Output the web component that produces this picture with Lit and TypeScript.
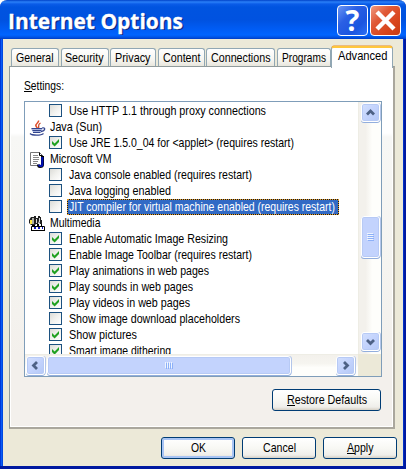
import { LitElement, html, svg, css } from "lit";
import { customElement, property } from "lit/decorators.js";

/** One line of text fitted to a fixed advance width. `mark` underlines the first letter. */
@customElement("ui-label")
class UiLabel extends LitElement {
  @property() text = "";
  @property({ type: Number }) w = 40;
  @property({ type: Number }) dx = 0;
  @property({ type: Number }) base = 12;
  @property({ type: Boolean }) mark = false;

  static styles = css`
    :host { display: block; flex: none; color: #000; }
    svg { display: block; overflow: visible; }
    text { font: 12.6px "Liberation Sans", Arial, sans-serif; fill: currentColor; white-space: pre; }
    .line { stroke: currentColor; stroke-width: 1; shape-rendering: crispEdges; }
  `;

  render() {
    return html`<svg width=${this.w} height="16">
      <text x=${this.dx} y=${this.base} textLength=${this.w} lengthAdjust="spacingAndGlyphs">${this.text}</text>
      ${this.mark ? svg`<path class="line" d="M${this.dx} ${Math.floor(this.base) + 1.5}h7.5"/>` : ""}
    </svg>`;
  }
}

@customElement("ui-check")
class UiCheck extends LitElement {
  @property({ type: Boolean }) on = false;

  static styles = css`
    :host {
      display: block; box-sizing: border-box; width: 13px; height: 13px; flex: none;
      border: 1px solid #1c5180; background: linear-gradient(135deg, #dcdcd7, #f1f1ee 50%, #fff);
    }
    svg { display: block; }
  `;

  render() {
    return html`<svg width="11" height="11">
      ${this.on ? svg`<path d="M2 4v3l2.6 2.6L9 5V2L4.6 6.4z" fill="#21a121"/>` : ""}
    </svg>`;
  }
}

const javaIcon = svg`
  <path d="M8.5 0.5c1 2-3.5 3-2.5 5.500 .3 1 1.500 1.500 1.500 2.500" fill="none" stroke="#e0502c" stroke-width="1.500"/>
  <path d="M10.500 3c-3 1.500-1.500 2.500-1.800 5" fill="none" stroke="#c8401c" stroke-width="1.200"/>
  <path d="M1 8.500h11.500l-1 3.800H3z" fill="#a9b5dc"/>
  <path d="M1.500 8.500h10.500M2.500 10.500h8.500M3 12.500h7.500M0 13.500c2 2.200 11 2.200 13.500 0" fill="none" stroke="#34468f" stroke-width="1.200"/>
  <path d="M12 8c4-1.200 3.500 3-1 3.500" fill="none" stroke="#34468f" stroke-width="1.300"/>`;

const vmIcon = svg`
  <path d="M.5.500h9l3 3v10H.5z" fill="#fff" stroke="#777"/>
  <path d="M9.500.500v3h3" fill="none" stroke="#000"/>
  <path d="M3 3.500h5M3 5.500h6M3 7.500h6M3 9.500h5M3 11.500h4" stroke="#888" fill="none"/>
  <path d="M12.500 4v8.500c0 1.600-1 2-2.500 2-1 0-1.500-.6-1.500-2" fill="none" stroke="#000" stroke-width="3"/>
  <path d="M12.300 5v7.500c0 1.200-.8 1.500-2 1.500-.8 0-1.200-.4-1.300-1.300" fill="none" stroke="#0010b8" stroke-width="2.200"/>`;

const mediaIcon = svg`
  <path d="M1 1h3V0h2v2h2V0h2v1h1v3h1v4h-2l-1-3-1 3H6L5 9H1L-1 7V4z" fill="#222"/>
  <path d="M0 4h2v4H0z" fill="#ffe840"/><path d="M2 2h2v6H2z" fill="#b0b0a8"/>
  <path d="M6 3h1v4H6zM9 2h1v4H9z" fill="#ddd"/>
  <path d="M1.500 10.500h13v4h-13z" fill="#fff" stroke="#000"/>
  <path d="M2 9h3v2H2zM7 8h2v3H7zM11 8h1v3h-1z" fill="#000"/>
  <path d="M4 11h2v2H4zM8 11h2v2H8zM12 11h1v2h-1z" fill="#1018c0"/>
  <path d="M1 14h14v1H1z" fill="#000"/>`;

type Row = { text: string; w: number; on?: boolean; icon?: unknown; selected?: boolean };

const rows: Row[] = [
  { text: "Use HTTP 1.1 through proxy connections", w: 197 },
  { text: "Java (Sun)", w: 52, icon: javaIcon },
  { text: "Use JRE 1.5.0_04 for <applet> (requires restart)", w: 225, on: true },
  { text: "Microsoft VM", w: 61.5, icon: vmIcon },
  { text: "Java console enabled (requires restart)", w: 183 },
  { text: "Java logging enabled", w: 102 },
  { text: "JIT compiler for virtual machine enabled (requires restart)", w: 266, selected: true },
  { text: "Multimedia", w: 50.5, icon: mediaIcon },
  { text: "Enable Automatic Image Resizing", w: 159, on: true },
  { text: "Enable Image Toolbar (requires restart)", w: 183, on: true },
  { text: "Play animations in web pages", w: 140, on: true },
  { text: "Play sounds in web pages", w: 124, on: true },
  { text: "Play videos in web pages", w: 121, on: true },
  { text: "Show image download placeholders", w: 171 },
  { text: "Show pictures", w: 68, on: true },
  { text: "Smart image dithering", w: 102, on: true },
];

const tabs = [
  { text: "General", box: 48, w: 37.5 },
  { text: "Security", box: 48, w: 38.5 },
  { text: "Privacy", box: 46, w: 35.5 },
  { text: "Content", box: 47, w: 37.5 },
  { text: "Connections", box: 69, w: 59.5 },
  { text: "Programs", box: 54, w: 44 },
];

const arrows: Record<string, string> = {
  up: "M5.500 11 9 7.500l3.500 3.500",
  down: "M5.500 7.500 9 11l3.500-3.500",
  left: "M10.500 5.500 7 9l3.500 3.500",
  right: "M7.500 5.500 11 9l-3.500 3.500",
};

@customElement("app-root")
class AppRoot extends LitElement {
  static styles = css`
    :host { display: block; width: 406px; height: 469px; overflow: hidden; }
    * { box-sizing: border-box; }
    svg { display: block; }
    .window {
      width: 406px; height: 469px; display: flex; flex-direction: column;
      background: linear-gradient(90deg, #0038d8 0, #0038d8 1px, #0a5cf5 1px, #0a5cf5 2px, #0148e0 2px, #0148e0 3px, transparent 3px, transparent 403px, #0030c8 403px, #0030c8 404px, #0019a0 404px), #ece9d8;
      border-radius: 7px 7px 0 0; border-bottom: 3px solid #0019a0;
    }
    .title {
      height: 39px; flex: none; display: flex; padding: 5px 5px 0 8px; gap: 2px;
      background: linear-gradient(180deg, #0042c8 0, #2a80f8 2px, #0a5ce8 4px, #0054e0 7px, #0052e0 20px, #005cf4 29px, #0064ff 35px, #0055e8 37px, #003cc4 39px);
      border-radius: 7px 7px 0 0;
    }
    .caption { flex: 1; }
    .caption svg { overflow: visible; }
    .caption text { font: 700 21.5px "Open Sans", "Noto Sans", sans-serif; }
    .shade { fill: #0a2a88; }
    .face { fill: #fff; stroke: #fff; stroke-width: .3; }
    .tool { width: 31px; height: 31px; border: 1px solid #fff; border-radius: 4px; }
    .tool svg { width: 29px; height: 29px; overflow: visible; }
    .help { background: linear-gradient(135deg, #6b96f4, #2a60e4 35%, #1c55e0 70%, #2b70f5); }
    .close { background: linear-gradient(135deg, #f09a80, #e05a38 35%, #d8451c 70%, #c83c14); }
    .q { font: 700 29px "Open Sans", sans-serif; fill: #fff; }
    .tabs { height: 28px; flex: none; display: flex; align-items: flex-end; padding-left: 11px; gap: 1.600px; }
    .tab {
      height: 19px; border: 1px solid #91a7b4; border-bottom: none; border-radius: 3px 3px 0 0;
      background: linear-gradient(#fff, #f6f5f0 60%, #e6e4da); display: flex; justify-content: center; padding-top: 1px;
    }
    .tab.active {
      width: 62px; height: 22px; border-top: 2px solid #ffc73c; background: #fff;
      box-shadow: 0 -1px 0 -0.500px #e68b2c; position: relative; margin: 0 0 -1px -1.500px; padding: 0 0 0 1px;
    }
    .panel {
      margin: -1px 0 0 9px; width: 386px; height: 363px; flex: none; padding: 10px 0 0 14px;
      border: 1px solid #919b9c; border-right: 2px solid #aaa79d; border-bottom: 2px solid #aaa79d;
      background: linear-gradient(180deg, #fff 0, #fff 66px, #f7f7f5 70px, #f5f4f0 200px, #f3f0ec 290px, #f3f0ec);
      box-shadow: inset 1px 0 #fff, inset -1px -1px #fff;
    }
    .settings { height: 24px; }
    .list {
      width: 358px; height: 276px; border: 1px solid #7f9db9; background: #fff;
      display: grid; grid-template: 252px 22px / 333px 23px;
    }
    .items { overflow: hidden; padding-top: 1px; }
    .row { display: flex; height: 16px; }
    .item { padding-left: 24px; gap: 5px; }
    .item ui-check { margin-top: 1px; }
    .item .txt { height: 16px; padding-left: 2px; }
    .group { padding-left: 5px; gap: 4.500px; }
    .group svg { overflow: visible; margin-top: 1px; flex: none; }
    .selected .txt { background: #316ac5; box-shadow: inset 0 0 0 1px #0a1430; outline: 1px dotted #e8a020; outline-offset: -1px; width: 272px; }
    .selected ui-label { color: #fff; }
    .vbar { display: flex; flex-direction: column; padding: 1px 1px 0 2px; border-left: 1px solid #eeede5;
      background: linear-gradient(90deg, #f3f1ec, #f3f1ec 30%, #fefefb 60%, #fefefb); }
    .hbar { display: flex; padding: 1px 0 1px 1px; border-top: 1px solid #eeede5;
      background: linear-gradient(#f3f1ec, #f6f5f0 40%, #fefefb 60%); }
    .corner { background: #ece9d8; }
    .arrow, .thumb {
      border: 1px solid #fff; border-radius: 3px; background: linear-gradient(135deg, #d3e0fe, #c3d3fd 50%, #b4c8f6);
      box-shadow: 0 1px 0 #92aedd, 1px 0 0 #b3c6ea, inset 0 0 0 1px #b7caf5; display: flex; align-items: center; justify-content: center;
    }
    .thumb { background: #c3d3fd; }
    .arrow { width: 19px; height: 19px; flex: none; }
    .arrow path { fill: none; stroke: #4d6185; stroke-width: 2.800; }
    .vthumb { height: 42px; margin: 94px 0 74px; width: 19px; }
    .hthumb { width: 244px; height: 19px; margin: 0 45px 0 2px; }
    .grip path { fill: none; stroke: #eef4fe; }
    .grip .dark { stroke: #8cb0f8; }
    .button {
      height: 22px; border: 1px solid #003c74; border-radius: 3px; display: flex; justify-content: center; padding-top: 2px;
      background: linear-gradient(#fff, #f8f8f4 50%, #efeeea 85%, #d6d0c5); width: 74px;
    }
    .restore { width: 109px; margin: 12px 0 0 248px; }
    .default { box-shadow: inset 0 0 0 2px #a8c4f4; }
    .footer { display: flex; gap: 7px; padding: 8px 0 0 161px; }
  `;

  arrow(dir: string) {
    return html`<div class="arrow"><svg width="17" height="17" viewBox="0.500 0.500 17 17"><path d=${arrows[dir]} /></svg></div>`;
  }

  row(r: Row) {
    if (r.icon)
      return html`<div class="row group"><svg width="15" height="15">${r.icon}</svg><ui-label .text=${r.text} .w=${r.w}></ui-label></div>`;
    return html`<div class="row item ${r.selected ? "selected" : ""}">
      <ui-check .on=${!!r.on}></ui-check>
      <div class="txt"><ui-label .text=${r.text} .w=${r.w}></ui-label></div>
    </div>`;
  }

  render() {
    return html`<div class="window">
      <div class="title">
        <div class="caption"><svg width="180" height="32">
          <text class="shade" x="1.500" y="24.500" textLength="175" lengthAdjust="spacingAndGlyphs" aria-hidden="true">Internet Options</text>
          <text class="face" x="0" y="23.500" textLength="175" lengthAdjust="spacingAndGlyphs">Internet Options</text>
        </svg></div>
        <div class="tool help"><svg><text class="q" x="14.500" y="25" text-anchor="middle">?</text></svg></div>
        <div class="tool close"><svg><path d="M6 6l17 17M23 6l-17 17" stroke="#fff" stroke-width="4.400"/></svg></div>
      </div>
      <div class="tabs">
        ${tabs.map((t) => html`<div class="tab" style="width:${t.box}px"><ui-label .text=${t.text} .w=${t.w}></ui-label></div>`)}
        <div class="tab active"><ui-label text="Advanced" .w=${49.5} .base=${12}></ui-label></div>
      </div>
      <div class="panel">
        <div class="settings"><ui-label text="Settings:" .w=${40} .base=${13} mark></ui-label></div>
        <div class="list">
          <div class="items">${rows.map((r) => this.row(r))}</div>
          <div class="vbar">
            ${this.arrow("up")}
            <div class="thumb vthumb"><svg class="grip" width="7" height="8"><path d="M0 .5h6M0 2.500h6M0 4.500h6M0 6.500h6"/><path class="dark" d="M1 1.500h6M1 3.500h6M1 5.500h6M1 7.500h6"/></svg></div>
            ${this.arrow("down")}
          </div>
          <div class="hbar">
            ${this.arrow("left")}
            <div class="thumb hthumb"><svg class="grip" width="8" height="7"><path d="M.5 0v6M2.500 0v6M4.500 0v6M6.500 0v6"/><path class="dark" d="M1.500 1v6M3.500 1v6M5.500 1v6M7.500 1v6"/></svg></div>
            ${this.arrow("right")}
          </div>
          <div class="corner"></div>
        </div>
        <div class="button restore"><ui-label text="Restore Defaults" .w=${80} mark></ui-label></div>
      </div>
      <div class="footer">
        <div class="button default"><ui-label text="OK" .w=${15}></ui-label></div>
        <div class="button"><ui-label text="Cancel" .w=${33}></ui-label></div>
        <div class="button"><ui-label text="Apply" .w=${26.5} mark></ui-label></div>
      </div>
    </div>`;
  }
}
